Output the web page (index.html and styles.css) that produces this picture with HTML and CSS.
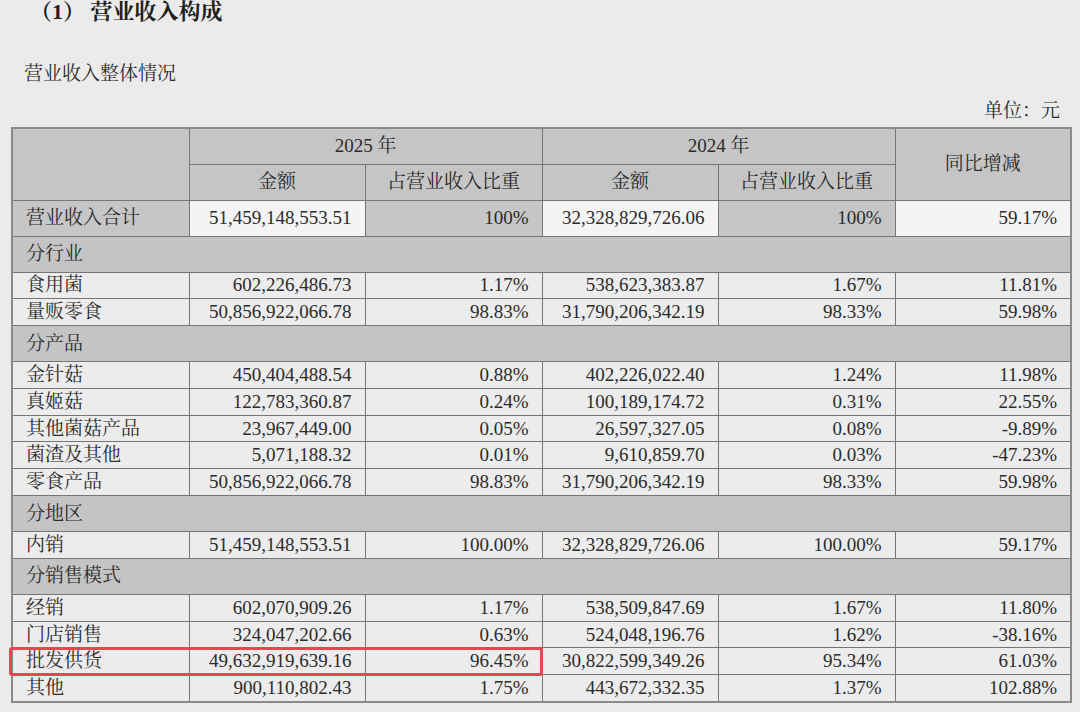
FILE: index.html
```html
<!DOCTYPE html>
<html lang="zh-CN">
<head>
<meta charset="utf-8">
<title>营业收入构成</title>
<link rel="stylesheet" href="styles.css">
</head>
<body>
<div class="page">
  <h1 class="title">（1） 营业收入构成</h1>
  <p class="subtitle">营业收入整体情况</p>
  <p class="unit">单位：元</p>
  <div class="table-wrap">
    <table class="rev">
      <colgroup>
        <col class="c-label"><col class="c-amt"><col class="c-pct"><col class="c-amt"><col class="c-pct"><col class="c-yoy">
      </colgroup>
      <thead>
        <tr class="h1">
          <th rowspan="2"></th>
          <th colspan="2">2025 年</th>
          <th colspan="2">2024 年</th>
          <th rowspan="2">同比增减</th>
        </tr>
        <tr class="h2">
          <th>金额</th><th>占营业收入比重</th><th>金额</th><th>占营业收入比重</th>
        </tr>
      </thead>
      <tbody>
        <tr class="total">
          <td class="lbl shade">营业收入合计</td>
          <td class="num light">51,459,148,553.51</td>
          <td class="num shade">100%</td>
          <td class="num light">32,328,829,726.06</td>
          <td class="num shade">100%</td>
          <td class="num light">59.17%</td>
        </tr>
        <tr class="sec"><td colspan="6">分行业</td></tr>
        <tr class="row"><td class="lbl">食用菌</td><td class="num">602,226,486.73</td><td class="num">1.17%</td><td class="num">538,623,383.87</td><td class="num">1.67%</td><td class="num">11.81%</td></tr>
        <tr class="row"><td class="lbl">量贩零食</td><td class="num">50,856,922,066.78</td><td class="num">98.83%</td><td class="num">31,790,206,342.19</td><td class="num">98.33%</td><td class="num">59.98%</td></tr>
        <tr class="sec"><td colspan="6">分产品</td></tr>
        <tr class="row"><td class="lbl">金针菇</td><td class="num">450,404,488.54</td><td class="num">0.88%</td><td class="num">402,226,022.40</td><td class="num">1.24%</td><td class="num">11.98%</td></tr>
        <tr class="row"><td class="lbl">真姬菇</td><td class="num">122,783,360.87</td><td class="num">0.24%</td><td class="num">100,189,174.72</td><td class="num">0.31%</td><td class="num">22.55%</td></tr>
        <tr class="row"><td class="lbl">其他菌菇产品</td><td class="num">23,967,449.00</td><td class="num">0.05%</td><td class="num">26,597,327.05</td><td class="num">0.08%</td><td class="num">-9.89%</td></tr>
        <tr class="row"><td class="lbl">菌渣及其他</td><td class="num">5,071,188.32</td><td class="num">0.01%</td><td class="num">9,610,859.70</td><td class="num">0.03%</td><td class="num">-47.23%</td></tr>
        <tr class="row"><td class="lbl">零食产品</td><td class="num">50,856,922,066.78</td><td class="num">98.83%</td><td class="num">31,790,206,342.19</td><td class="num">98.33%</td><td class="num">59.98%</td></tr>
        <tr class="sec"><td colspan="6">分地区</td></tr>
        <tr class="row"><td class="lbl">内销</td><td class="num">51,459,148,553.51</td><td class="num">100.00%</td><td class="num">32,328,829,726.06</td><td class="num">100.00%</td><td class="num">59.17%</td></tr>
        <tr class="sec"><td colspan="6">分销售模式</td></tr>
        <tr class="row"><td class="lbl">经销</td><td class="num">602,070,909.26</td><td class="num">1.17%</td><td class="num">538,509,847.69</td><td class="num">1.67%</td><td class="num">11.80%</td></tr>
        <tr class="row"><td class="lbl">门店销售</td><td class="num">324,047,202.66</td><td class="num">0.63%</td><td class="num">524,048,196.76</td><td class="num">1.62%</td><td class="num">-38.16%</td></tr>
        <tr class="row"><td class="lbl">批发供货</td><td class="num">49,632,919,639.16</td><td class="num">96.45%</td><td class="num">30,822,599,349.26</td><td class="num">95.34%</td><td class="num">61.03%</td></tr>
        <tr class="row"><td class="lbl">其他</td><td class="num">900,110,802.43</td><td class="num">1.75%</td><td class="num">443,672,332.35</td><td class="num">1.37%</td><td class="num">102.88%</td></tr>
      </tbody>
    </table>
    <div class="highlight"></div>
  </div>
</div>
</body>
</html>
```

FILE: styles.css
```css
* { box-sizing: border-box; }
html, body {
  margin: 0;
  padding: 0;
  background: #ebebeb;
}
body {
  font-family: "Liberation Serif", "Noto Serif CJK SC", "Noto Sans CJK SC", serif;
  color: #2b2b2b;
}
.page {
  padding: 0 11px;
  width: 1080px;
  height: 712px;
  overflow: hidden;
}
.title {
  margin: 0 0 0 19px;
  font-size: 22px;
  font-weight: bold;
  line-height: 24px;
  height: 24px;
  color: #1f1f1f;
}
.subtitle {
  margin: 38px 0 0 13px;
  font-size: 19px;
  line-height: 24px;
  height: 24px;
}
.unit {
  margin: 13px 0 0 0;
  padding-right: 9px;
  text-align: right;
  font-size: 19px;
  line-height: 24px;
  height: 24px;
}
.table-wrap {
  position: relative;
  margin-top: 4px;
}
.rev {
  border-collapse: collapse;
  table-layout: fixed;
  width: 1058px;
  font-size: 19px;
  border: 2px solid #8a8a8a;
}
.c-label { width: 177px; }
.c-amt { width: 176px; }
.c-pct { width: 177px; }
.c-yoy { width: 176px; }
.rev th, .rev td {
  border: 1px solid #767676;
  padding: 0 13px;
  white-space: nowrap;
  font-weight: normal;
  line-height: 22px;
}
.rev th {
  background: #c5c5c5;
  text-align: center;
}
.h1 { height: 36px; }
.h2 { height: 36px; }
.total { height: 36px; }
.sec { height: 36px; }
.sec td { background: #c4c4c4; text-align: left; }
.row { height: 26.8px; }
.row td { background: #ececec; }
.lbl { text-align: left; }
.num { text-align: right; }
.shade { background: #c6c6c6; }
.light { background: #f4f4f4; }
.highlight {
  position: absolute;
  left: -2px;
  top: 520px;
  width: 534px;
  height: 29px;
  border: 3px solid #e5474f;
  border-radius: 3px;
  pointer-events: none;
}
```
